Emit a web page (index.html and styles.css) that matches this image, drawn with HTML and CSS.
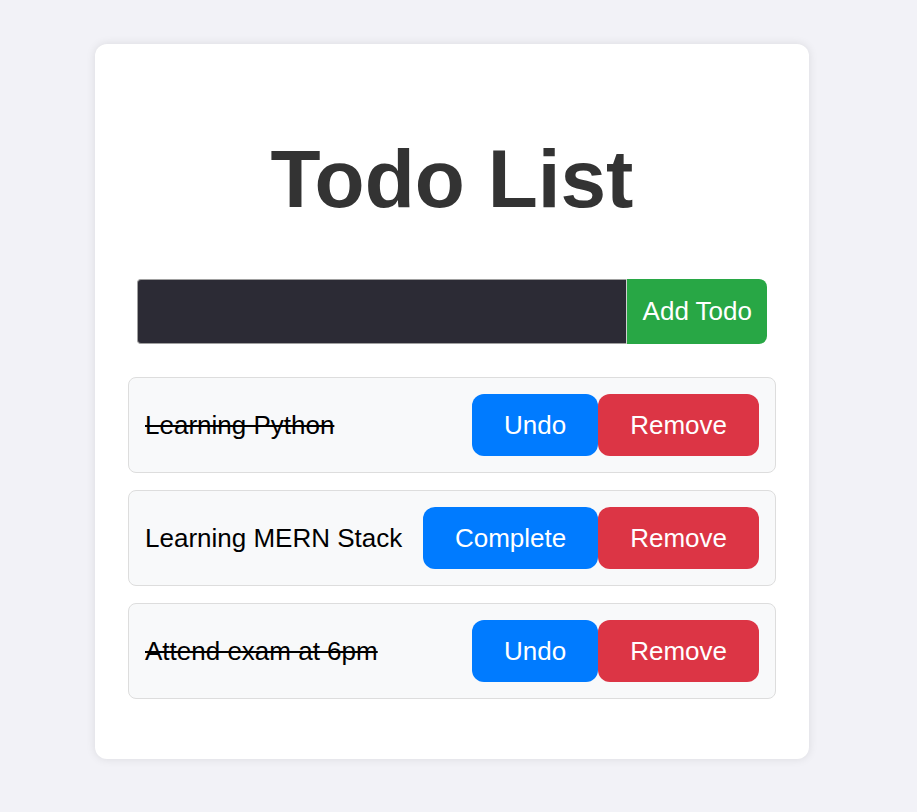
FILE: index.html
```html
<!DOCTYPE html>
<html lang="en">
<head>
<meta charset="utf-8">
<title>Todo List</title>
<link rel="stylesheet" href="styles.css">
</head>
<body>
<div class="card">
  <h1 class="title">Todo List</h1>
  <form class="todo-form">
    <input class="todo-input" type="text">
    <button class="add-btn" type="button">Add Todo</button>
  </form>
  <ul class="todo-list">
    <li class="todo-item">
      <span class="todo-text done">Learning Python</span>
      <div class="actions">
        <button class="btn btn-blue" type="button">Undo</button>
        <button class="btn btn-red" type="button">Remove</button>
      </div>
    </li>
    <li class="todo-item">
      <span class="todo-text">Learning MERN Stack</span>
      <div class="actions">
        <button class="btn btn-blue" type="button">Complete</button>
        <button class="btn btn-red" type="button">Remove</button>
      </div>
    </li>
    <li class="todo-item">
      <span class="todo-text done">Attend exam at 6pm</span>
      <div class="actions">
        <button class="btn btn-blue" type="button">Undo</button>
        <button class="btn btn-red" type="button">Remove</button>
      </div>
    </li>
  </ul>
</div>
</body>
</html>
```
FILE: styles.css
```css
* { box-sizing: border-box; }
html, body { margin: 0; padding: 0; }
body {
  background: #f2f2f7;
  font-family: "Liberation Sans", Arial, sans-serif;
  padding: 44px 0 54px 95px;
}
.card {
  width: 714px;
  background: #fff;
  border-radius: 12px;
  box-shadow: 0 0 10px rgba(0, 0, 0, 0.1);
  padding: 32px 33px 32px;
}
.title {
  margin: 56px 0 53px;
  text-align: center;
  font-size: 82px;
  font-weight: bold;
  color: #333;
  line-height: normal;
}
.todo-form {
  display: flex;
  margin: 0 9px;
  height: 65px;
}
.todo-input {
  flex: 1;
  min-width: 0;
  margin: 0;
  height: 65px;
  background: #2c2b35;
  border: 1px solid #a0a0a0;
  border-right: none;
  border-radius: 4px 0 0 4px;
  font-size: 26px;
  color: #fff;
  padding: 0 12px;
}
.add-btn {
  height: 65px;
  margin: 0;
  border: none;
  background: #28a745;
  color: #fff;
  font-family: "Liberation Sans", Arial, sans-serif;
  font-size: 26px;
  padding: 0 15px 0 16px;
  border-radius: 0 8px 8px 0;
  border-left: 1px solid #d0d0d0;
}
.todo-list {
  list-style: none;
  margin: 33px 0 28px;
  padding: 0;
  display: flex;
  flex-direction: column;
  gap: 17px;
}
.todo-item {
  display: flex;
  align-items: center;
  justify-content: space-between;
  background: #f8f9fa;
  border: 1px solid #ddd;
  border-radius: 8px;
  padding: 16px;
}
.todo-text {
  font-size: 26px;
  color: #000;
}
.todo-text.done { text-decoration: line-through; }
.actions { display: flex; }
.btn {
  border: none;
  margin: 0;
  font-family: "Liberation Sans", Arial, sans-serif;
  font-size: 26px;
  line-height: 28px;
  color: #fff;
  padding: 17px 32px;
  border-radius: 12px;
}
.btn-blue { background: #007bff; }
.btn-red { background: #dc3545; }
```
